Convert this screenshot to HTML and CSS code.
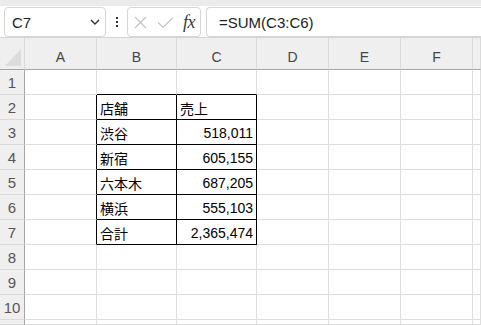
FILE: index.html
```html
<!DOCTYPE html>
<html lang="ja">
<head>
  <meta charset="UTF-8">
  <title>Sheet</title>
  <link rel="stylesheet" href="styles.css">
</head>
<body>
  <div class="topbar"></div>
  <div class="formula-bar">
    <div class="namebox">
      <span>C7</span>
      <svg width="10" height="6" viewBox="0 0 10 6"><path d="M1 1 L5 5 L9 1" fill="none" stroke="#333" stroke-width="1.4"/></svg>
    </div>
    <div class="dots"><i></i><i></i><i></i></div>
    <div class="fnbox">
      <svg width="13" height="13" viewBox="0 0 13 13"><path d="M1 1 L12 12 M12 1 L1 12" stroke="#c4c4c4" stroke-width="1.2"/></svg>
      <svg width="17" height="11" viewBox="0 0 17 11"><path d="M1 5.5 L6 10.3 L16 0.6" fill="none" stroke="#c4c4c4" stroke-width="1.2"/></svg>
      <span class="fx">fx</span>
    </div>
    <div class="formula">=SUM(C3:C6)</div>
  </div>

  <div class="sheet">
    <div class="corner"><b></b></div>
    <div class="colhead">A</div>
    <div class="colhead">B</div>
    <div class="colhead">C</div>
    <div class="colhead">D</div>
    <div class="colhead">E</div>
    <div class="colhead">F</div>
    <div class="colhead"></div>

    <div class="rowhead">1</div>
    <div class="cell"></div><div class="cell edge-b"></div><div class="cell edge-b"></div><div class="cell"></div><div class="cell"></div><div class="cell"></div><div class="cell"></div>

    <div class="rowhead">2</div>
    <div class="cell edge-r"></div><div class="cell tb">店舗</div><div class="cell tb">売上</div><div class="cell"></div><div class="cell"></div><div class="cell"></div><div class="cell"></div>

    <div class="rowhead">3</div>
    <div class="cell edge-r"></div><div class="cell tb">渋谷</div><div class="cell tb num">518,011</div><div class="cell"></div><div class="cell"></div><div class="cell"></div><div class="cell"></div>

    <div class="rowhead">4</div>
    <div class="cell edge-r"></div><div class="cell tb">新宿</div><div class="cell tb num">605,155</div><div class="cell"></div><div class="cell"></div><div class="cell"></div><div class="cell"></div>

    <div class="rowhead">5</div>
    <div class="cell edge-r"></div><div class="cell tb">六本木</div><div class="cell tb num">687,205</div><div class="cell"></div><div class="cell"></div><div class="cell"></div><div class="cell"></div>

    <div class="rowhead">6</div>
    <div class="cell edge-r"></div><div class="cell tb">横浜</div><div class="cell tb num">555,103</div><div class="cell"></div><div class="cell"></div><div class="cell"></div><div class="cell"></div>

    <div class="rowhead">7</div>
    <div class="cell edge-r"></div><div class="cell tb">合計</div><div class="cell tb num">2,365,474</div><div class="cell"></div><div class="cell"></div><div class="cell"></div><div class="cell"></div>

    <div class="rowhead">8</div>
    <div class="cell"></div><div class="cell"></div><div class="cell"></div><div class="cell"></div><div class="cell"></div><div class="cell"></div><div class="cell"></div>

    <div class="rowhead">9</div>
    <div class="cell"></div><div class="cell"></div><div class="cell"></div><div class="cell"></div><div class="cell"></div><div class="cell"></div><div class="cell"></div>

    <div class="rowhead">10</div>
    <div class="cell"></div><div class="cell"></div><div class="cell"></div><div class="cell"></div><div class="cell"></div><div class="cell"></div><div class="cell"></div>

    <div class="rowhead"></div>
    <div class="cell"></div><div class="cell"></div><div class="cell"></div><div class="cell"></div><div class="cell"></div><div class="cell"></div><div class="cell"></div>
  </div>
</body>
</html>
```

FILE: styles.css
```css
* {
  box-sizing: border-box;
}

body {
  margin: 0;
  width: 481px;
  height: 325px;
  overflow: hidden;
  background: #fff;
  font-family: "Liberation Sans", "Noto Sans CJK JP", sans-serif;
  color: #000;
  display: flex;
  flex-direction: column;
}

.topbar {
  height: 6px;
  flex: none;
  background: #ebebeb;
  box-shadow: 0 1px 1px rgba(0, 0, 0, 0.08);
}

.formula-bar {
  height: 32px;
  flex: none;
  display: flex;
  align-items: flex-start;
  padding: 1px 0 0 4px;
  border-bottom: 1px solid #d4d4d4;
  background: #fff;
  white-space: nowrap;
}

.namebox,
.fnbox,
.formula {
  height: 30px;
  border: 1px solid #d6d6d6;
  border-radius: 4px;
  display: flex;
  align-items: center;
}

.namebox {
  width: 102px;
  padding: 0 5px 0 7px;
  justify-content: space-between;
  font-size: 15px;
  color: #222;
}

.namebox span {
  padding-top: 1px;
}

.dots {
  width: 21px;
  height: 30px;
  display: flex;
  flex-direction: column;
  align-items: center;
  justify-content: center;
  gap: 2px;
}

.dots i {
  width: 2px;
  height: 2px;
  background: #333;
}

.fnbox {
  width: 74px;
  padding: 0 4px 0 6px;
  gap: 10px;
}

.fnbox .fx {
  font-family: "Liberation Serif", "DejaVu Serif", serif;
  font-style: italic;
  font-size: 18px;
  color: #3a3a3a;
  margin-left: -1px;
  letter-spacing: -0.5px;
}

.formula {
  flex: 1;
  margin-left: 5px;
  padding-left: 12px;
  border-right: none;
  border-radius: 4px 0 0 4px;
  font-size: 15px;
  color: #222;
}

.sheet {
  flex: 1;
  min-height: 0;
  display: grid;
  grid-template-columns: 25px 72px 80px 80px 72px 72px 72px 1fr;
  grid-template-rows: 32px repeat(10, 25px) 1fr;
  font-size: 14px;
}

.corner,
.colhead,
.rowhead {
  background: #efefef;
  color: #444;
  display: flex;
  justify-content: center;
}

.corner {
  border-right: 1px solid #dadada;
  border-bottom: 1px solid #a6a6a6;
  position: relative;
}

.corner b {
  position: absolute;
  right: 3px;
  bottom: 3px;
  width: 0;
  height: 0;
  border-left: 16px solid transparent;
  border-bottom: 17px solid #dcdcdc;
}

.colhead {
  align-items: center;
  padding-top: 7px;
  border-right: 1px solid #dadada;
  border-bottom: 1px solid #a6a6a6;
}

.rowhead {
  align-items: center;
  padding-top: 1px;
  border-right: 1px solid #a6a6a6;
  border-bottom: 1px solid #dadada;
  color: #555;
  font-size: 15px;
}

.cell {
  border-right: 1px solid #dedede;
  border-bottom: 1px solid #dedede;
  display: flex;
  align-items: center;
  padding: 1px 3px 0;
  overflow: hidden;
  white-space: nowrap;
}

.cell.tb {
  border-right-color: #000;
  border-bottom-color: #000;
}

.cell.num {
  justify-content: flex-end;
  padding-right: 3px;
}

.cell.edge-r {
  border-right-color: #000;
}

.cell.edge-b {
  border-bottom-color: #000;
}
```
